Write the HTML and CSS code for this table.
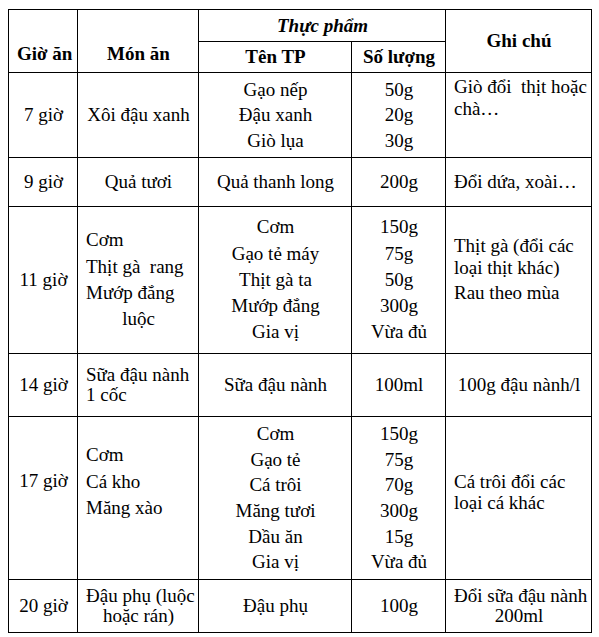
FILE: index.html
```html
<!DOCTYPE html>
<html lang="vi">
<head>
<meta charset="utf-8">
<title>Thực đơn</title>
<link rel="stylesheet" href="styles.css">
</head>
<body>
<table class="menu">
  <colgroup>
    <col class="w1"><col class="w2"><col class="w3"><col class="w4"><col class="w5">
  </colgroup>
  <tr class="h1">
    <th rowspan="2" class="bottom">Giờ ăn</th>
    <th rowspan="2" class="bottom">Món ăn</th>
    <th colspan="2" class="group">Thực phẩm</th>
    <th rowspan="2">Ghi chú</th>
  </tr>
  <tr class="h2">
    <th>Tên TP</th>
    <th>Số lượng</th>
  </tr>
  <tr class="r1">
    <td class="c">7 giờ</td>
    <td class="c">Xôi đậu xanh</td>
    <td class="c stack s1">Gạo nếp<br>Đậu xanh<br>Giò lụa</td>
    <td class="c stack s1">50g<br>20g<br>30g</td>
    <td class="l top note1">Giò đổi &nbsp;thịt hoặc<br>chà…</td>
  </tr>
  <tr class="r2">
    <td class="c">9 giờ</td>
    <td class="c">Quả tươi</td>
    <td class="c">Quả thanh long</td>
    <td class="c">200g</td>
    <td class="l">Đổi dứa, xoài…</td>
  </tr>
  <tr class="r3">
    <td class="c">11 giờ</td>
    <td class="l stack s2">Cơm<br>Thịt gà &nbsp;rang<br>Mướp đắng<div class="centerline">luộc</div></td>
    <td class="c stack s2">Cơm<br>Gạo tẻ máy<br>Thịt gà ta<br>Mướp đắng<br>Gia vị</td>
    <td class="c stack s2">150g<br>75g<br>50g<br>300g<br>Vừa đủ</td>
    <td class="l top note3"><div class="para">Thịt gà (đổi các<br>loại thịt khác)</div><div class="para gap">Rau theo mùa</div></td>
  </tr>
  <tr class="r4">
    <td class="c">14 giờ</td>
    <td class="l tight">Sữa đậu nành<br>1 cốc</td>
    <td class="c">Sữa đậu nành</td>
    <td class="c">100ml</td>
    <td class="c">100g đậu nành/l</td>
  </tr>
  <tr class="r5">
    <td class="c top hour5">17 giờ</td>
    <td class="l top stack dish5">Cơm<br>Cá kho<br>Măng xào</td>
    <td class="c stack s3">Cơm<br>Gạo tẻ<br>Cá trôi<br>Măng tươi<br>Dầu ăn<br>Gia vị</td>
    <td class="c stack s3">150g<br>75g<br>70g<br>300g<br>15g<br>Vừa đủ</td>
    <td class="l top note5">Cá trôi đổi các<br>loại cá khác</td>
  </tr>
  <tr class="r6">
    <td class="c">20 giờ</td>
    <td class="c tight">Đậu phụ (luộc<br>hoặc rán)</td>
    <td class="c">Đậu phụ</td>
    <td class="c">100g</td>
    <td class="c tight">Đổi sữa đậu nành<br>200ml</td>
  </tr>
</table>
</body>
</html>
```

FILE: styles.css
```css
html, body {
  background: #ffffff;
}
body {
  margin: 0;
  padding: 9px 0 0 8px;
  font-family: "Liberation Serif", "Times New Roman", serif;
  font-size: 19px;
  color: #000000;
}
.menu {
  border-collapse: collapse;
  table-layout: fixed;
  width: 583px;
}
.w1 { width: 69px; }
.w2 { width: 121px; }
.w3 { width: 153px; }
.w4 { width: 94px; }
.w5 { width: 146px; }

.menu th,
.menu td {
  border: 1px solid #000000;
  padding: 0 7px 0 8px;
  line-height: 22px;
  vertical-align: middle;
  white-space: nowrap;
  overflow: visible;
}
.menu th {
  font-weight: bold;
  text-align: center;
}
.menu th.bottom {
  vertical-align: bottom;
  padding-bottom: 7px;
}
.menu th.group {
  font-style: italic;
}
.h1 { height: 32px; }
.h2 { height: 31px; }
.r1 { height: 85px; }
.r2 { height: 49px; }
.r3 { height: 147px; }
.r4 { height: 63px; }
.r5 { height: 163px; }
.r6 { height: 53px; }

.c { text-align: center; }
.l { text-align: left; }
.top { vertical-align: top !important; }

.stack { line-height: 26px !important; }
.s1 { line-height: 25.5px !important; }
.s2 { line-height: 26.3px !important; }
.s3 { line-height: 25.7px !important; }
.tight { line-height: 20px !important; }

.centerline { text-align: center; }

.note1 { padding-top: 3px !important; }
.note3 { padding-top: 28px !important; }
.para.gap { margin-top: 3px; }
.hour5 { padding-top: 53px !important; }
.dish5 { padding-top: 25px !important; line-height: 26.5px !important; }
.note5 { padding-top: 54px !important; line-height: 21px !important; }
```
